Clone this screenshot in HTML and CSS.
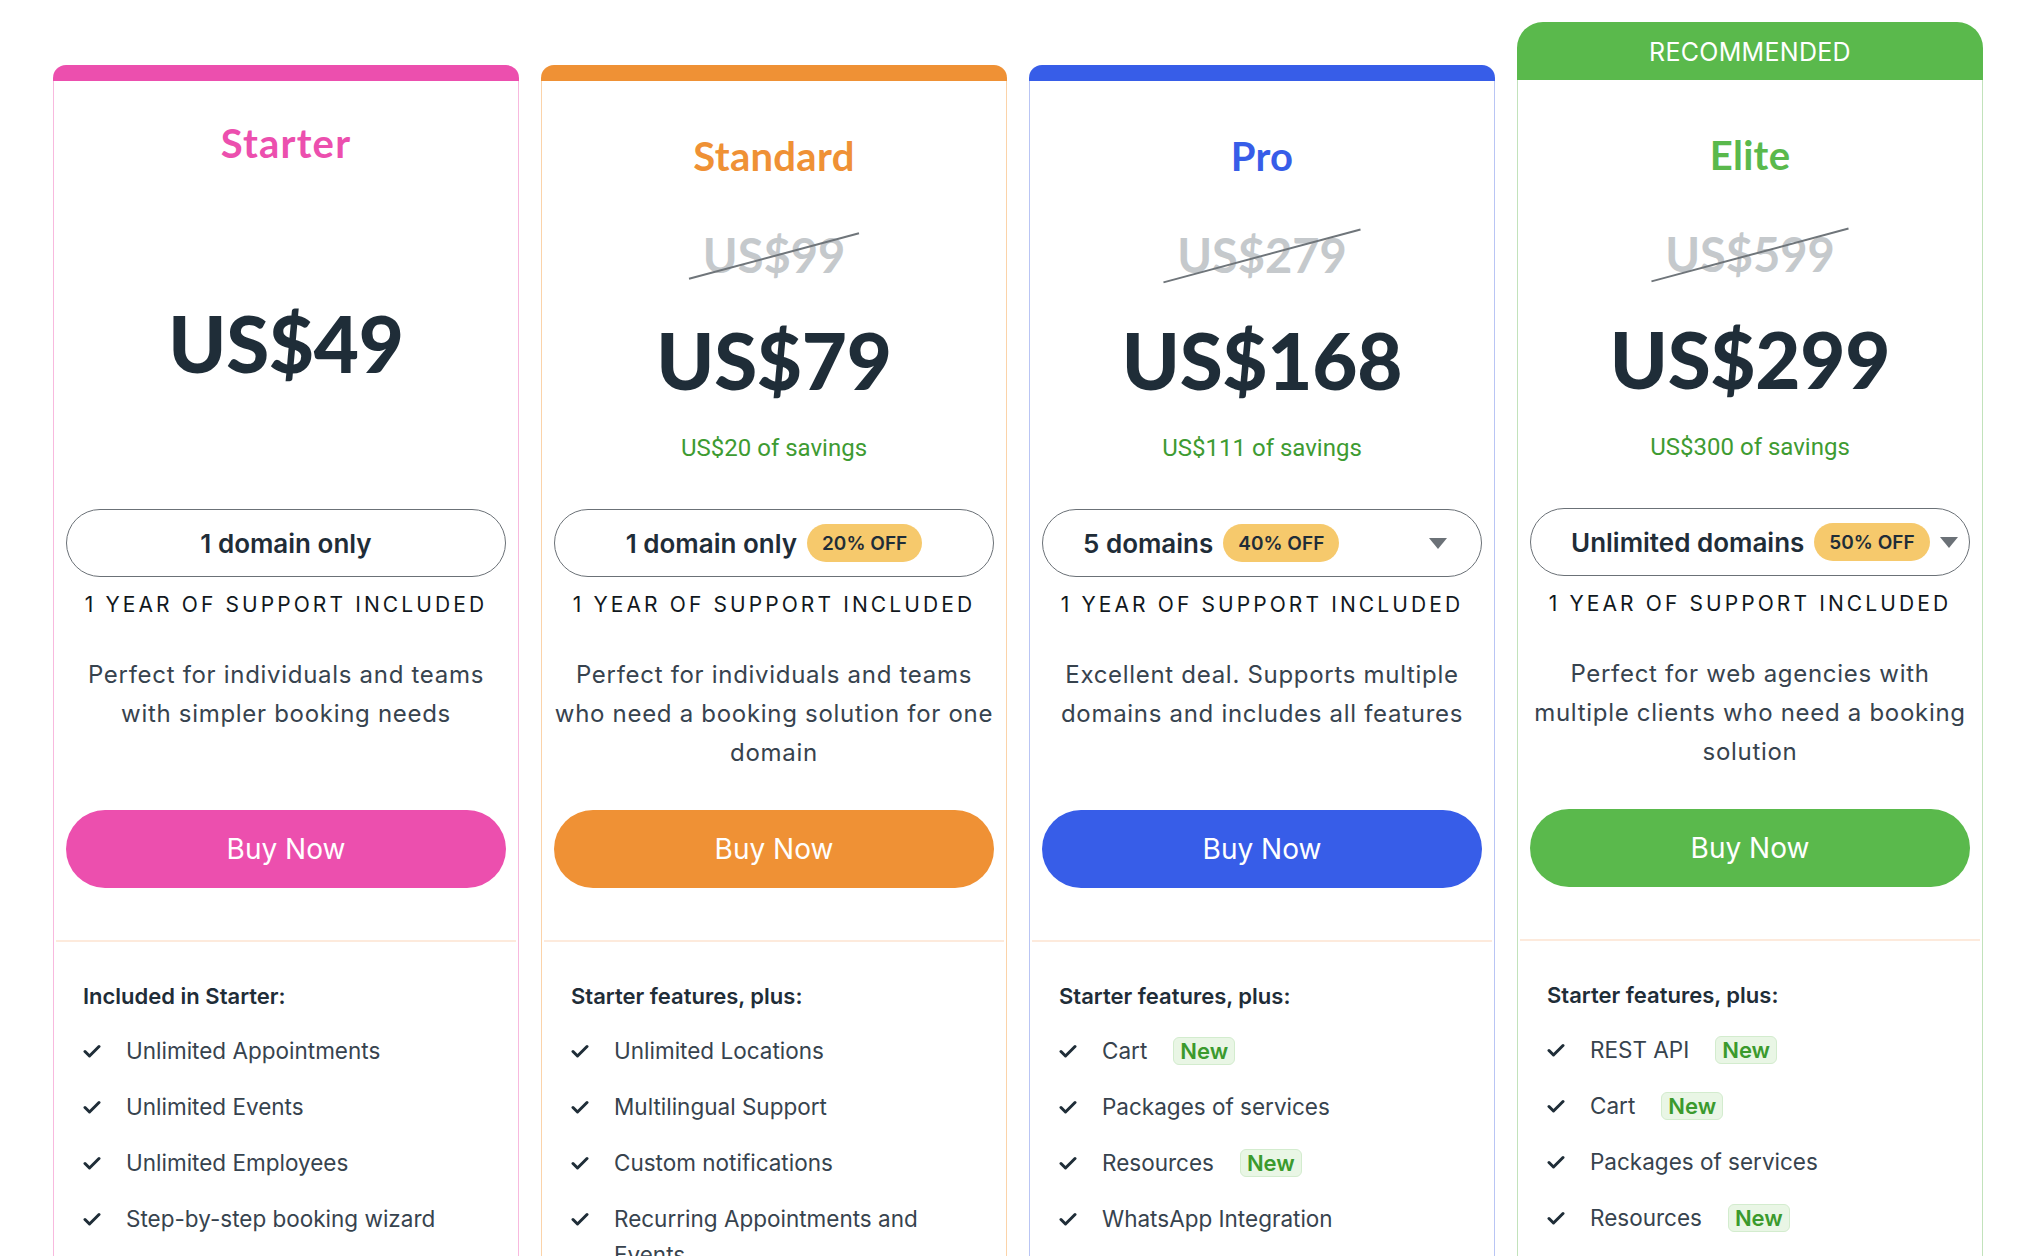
FILE: index.html
```html
<!DOCTYPE html>
<html lang="en">
<head>
<meta charset="utf-8">
<title>Pricing plans</title>
<link rel="stylesheet" href="styles.css">
</head>
<body>
<main class="plans">

  <section class="card card--starter">
    <div class="bar"></div>
    <div class="card-body">
      <div class="head">
        <h2 class="plan-name">Starter</h2>
        <div class="price">US$49</div>
      </div>
      <div class="select select--center"><span class="select-label">1 domain only</span></div>
      <p class="support">1 year of support included</p>
      <p class="desc">Perfect for individuals and teams with simpler booking needs</p>
      <a class="buy" href="#">Buy Now</a>
    </div>
    <div class="features">
      <h3 class="features-title">Included in Starter:</h3>
      <ul class="feature-list">
        <li><svg class="check" viewBox="0 0 18 14"><path d="M2 7.5 L6.5 12 L16 2.5"/></svg><span>Unlimited Appointments</span></li>
        <li><svg class="check" viewBox="0 0 18 14"><path d="M2 7.5 L6.5 12 L16 2.5"/></svg><span>Unlimited Events</span></li>
        <li><svg class="check" viewBox="0 0 18 14"><path d="M2 7.5 L6.5 12 L16 2.5"/></svg><span>Unlimited Employees</span></li>
        <li><svg class="check" viewBox="0 0 18 14"><path d="M2 7.5 L6.5 12 L16 2.5"/></svg><span>Step-by-step booking wizard</span></li>
      </ul>
    </div>
  </section>

  <section class="card card--standard">
    <div class="bar"></div>
    <div class="card-body">
      <div class="head">
        <h2 class="plan-name">Standard</h2>
        <div class="old-price"><span>US$99</span></div>
        <div class="price">US$79</div>
        <div class="savings">US$20 of savings</div>
      </div>
      <div class="select select--center"><span class="select-label">1 domain only</span><span class="off">20% OFF</span></div>
      <p class="support">1 year of support included</p>
      <p class="desc">Perfect for individuals and teams who need a booking solution for one domain</p>
      <a class="buy" href="#">Buy Now</a>
    </div>
    <div class="features">
      <h3 class="features-title">Starter features, plus:</h3>
      <ul class="feature-list">
        <li><svg class="check" viewBox="0 0 18 14"><path d="M2 7.5 L6.5 12 L16 2.5"/></svg><span>Unlimited Locations</span></li>
        <li><svg class="check" viewBox="0 0 18 14"><path d="M2 7.5 L6.5 12 L16 2.5"/></svg><span>Multilingual Support</span></li>
        <li><svg class="check" viewBox="0 0 18 14"><path d="M2 7.5 L6.5 12 L16 2.5"/></svg><span>Custom notifications</span></li>
        <li><svg class="check" viewBox="0 0 18 14"><path d="M2 7.5 L6.5 12 L16 2.5"/></svg><span>Recurring Appointments and Events</span></li>
      </ul>
    </div>
  </section>

  <section class="card card--pro">
    <div class="bar"></div>
    <div class="card-body">
      <div class="head">
        <h2 class="plan-name">Pro</h2>
        <div class="old-price"><span>US$279</span></div>
        <div class="price">US$168</div>
        <div class="savings">US$111 of savings</div>
      </div>
      <div class="select select--menu"><span class="select-label">5 domains</span><span class="off">40% OFF</span><span class="caret"></span></div>
      <p class="support">1 year of support included</p>
      <p class="desc">Excellent deal. Supports multiple domains and includes all features</p>
      <a class="buy" href="#">Buy Now</a>
    </div>
    <div class="features">
      <h3 class="features-title">Starter features, plus:</h3>
      <ul class="feature-list">
        <li><svg class="check" viewBox="0 0 18 14"><path d="M2 7.5 L6.5 12 L16 2.5"/></svg><span>Cart</span><span class="new">New</span></li>
        <li><svg class="check" viewBox="0 0 18 14"><path d="M2 7.5 L6.5 12 L16 2.5"/></svg><span>Packages of services</span></li>
        <li><svg class="check" viewBox="0 0 18 14"><path d="M2 7.5 L6.5 12 L16 2.5"/></svg><span>Resources</span><span class="new">New</span></li>
        <li><svg class="check" viewBox="0 0 18 14"><path d="M2 7.5 L6.5 12 L16 2.5"/></svg><span>WhatsApp Integration</span></li>
      </ul>
    </div>
  </section>

  <section class="card card--elite">
    <div class="ribbon">RECOMMENDED</div>
    <div class="card-body">
      <div class="head">
        <h2 class="plan-name">Elite</h2>
        <div class="old-price"><span>US$599</span></div>
        <div class="price">US$299</div>
        <div class="savings">US$300 of savings</div>
      </div>
      <div class="select select--menu"><span class="select-label">Unlimited domains</span><span class="off">50% OFF</span><span class="caret"></span></div>
      <p class="support">1 year of support included</p>
      <p class="desc">Perfect for web agencies with multiple clients who need a booking solution</p>
      <a class="buy" href="#">Buy Now</a>
    </div>
    <div class="features">
      <h3 class="features-title">Starter features, plus:</h3>
      <ul class="feature-list">
        <li><svg class="check" viewBox="0 0 18 14"><path d="M2 7.5 L6.5 12 L16 2.5"/></svg><span>REST API</span><span class="new">New</span></li>
        <li><svg class="check" viewBox="0 0 18 14"><path d="M2 7.5 L6.5 12 L16 2.5"/></svg><span>Cart</span><span class="new">New</span></li>
        <li><svg class="check" viewBox="0 0 18 14"><path d="M2 7.5 L6.5 12 L16 2.5"/></svg><span>Packages of services</span></li>
        <li><svg class="check" viewBox="0 0 18 14"><path d="M2 7.5 L6.5 12 L16 2.5"/></svg><span>Resources</span><span class="new">New</span></li>
      </ul>
    </div>
  </section>

</main>
</body>
</html>
```

FILE: styles.css
```css
* { box-sizing: border-box; }

html, body {
  margin: 0;
  padding: 0;
  background: #ffffff;
}

body {
  font-family: Inter, "Noto Sans", "Liberation Sans", sans-serif;
  color: #1f2d38;
  height: 1256px;
  overflow: hidden;
}

.plans {
  display: flex;
  align-items: flex-start;
  gap: 22px;
  padding: 22px 35px 0 53px;
}

.card {
  flex: 1 1 0;
  min-width: 0;
  margin-top: 43px;
  --accent: #ec4fae;
  --edge: #f8b9de;
}
.card--starter { --accent: #ec4fae; --edge: #f8b9de; }
.card--standard { --accent: #ef9135; --edge: #fbd3a9; }
.card--pro { --accent: #375de8; --edge: #b9c5f4; }
.card--elite { --accent: #5ab94c; --edge: #c2e3bb; margin-top: 0; }

.bar {
  height: 16px;
  background: var(--accent);
  border-radius: 13px 13px 0 0;
}

.ribbon {
  height: 58px;
  background: var(--accent);
  border-radius: 26px 26px 0 0;
  color: #ffffff;
  font-size: 25px;
  font-weight: 400;
  letter-spacing: 0.3px;
  display: flex;
  align-items: center;
  justify-content: center;
  padding-top: 2px;
}

.card-body {
  border-left: 1px solid var(--edge);
  border-right: 1px solid var(--edge);
  padding: 0 12px 52px;
  display: flex;
  flex-direction: column;
  align-items: stretch;
  text-align: center;
}

.head {
  height: 428px;
  display: flex;
  flex-direction: column;
  align-items: center;
}

.plan-name {
  margin: 50px 0 0;
  font-family: Lato, "Noto Sans", sans-serif;
  font-weight: 700;
  font-size: 40px;
  line-height: 50px;
  color: var(--accent);
  letter-spacing: 0.3px;
}
.card--starter .plan-name { letter-spacing: 1.2px; }

.old-price {
  margin-top: 46px;
  font-family: Lato, "Noto Sans", sans-serif;
  font-weight: 700;
  font-size: 47px;
  line-height: 56px;
  color: #c5c9cc;
}
.old-price span {
  position: relative;
  display: inline-block;
}
.old-price span::after {
  content: "";
  position: absolute;
  left: -17px;
  right: -17px;
  top: 50%;
  height: 2px;
  background: #6f757a;
  transform: rotate(-15deg);
}

.price {
  margin-top: 32px;
  font-family: Lato, "Noto Sans", sans-serif;
  font-weight: 900;
  font-size: 78px;
  line-height: 90px;
  color: #1f2d38;
  letter-spacing: -0.3px;
}

.savings {
  margin-top: 28px;
  font-family: Roboto, "Noto Sans", sans-serif;
  font-size: 24px;
  line-height: 30px;
  color: #3e9b32;
}

.card--starter .plan-name { margin-top: 37px; }
.card--starter .price { margin-top: 130px; }

.select {
  height: 68px;
  border: 1px solid #6b7177;
  border-radius: 34px;
  display: flex;
  align-items: center;
  gap: 10px;
}
.select--center { justify-content: center; }
.select--menu { justify-content: flex-start; padding: 0 34px 0 40px; }

.select-label {
  font-size: 26px;
  font-weight: 600;
  color: #1f2d38;
  white-space: nowrap;
}

.off {
  display: inline-flex;
  align-items: center;
  height: 38px;
  padding: 0 15px;
  border-radius: 19px;
  background: #f6c96c;
  font-size: 19px;
  font-weight: 600;
  color: #1f2d38;
  white-space: nowrap;
}

.caret {
  margin-left: auto;
  width: 0;
  height: 0;
  border-left: 9.5px solid transparent;
  border-right: 9.5px solid transparent;
  border-top: 11px solid #6b7177;
}

.support {
  margin: 13px 0 0;
  font-size: 21px;
  line-height: 30px;
  text-transform: uppercase;
  letter-spacing: 3.1px;
  color: #111820;
}

.desc {
  margin: 35px -5px 0;
  height: 155px;
  font-size: 24px;
  line-height: 39px;
  color: #37434e;
  letter-spacing: 0.7px;
}

.buy {
  display: flex;
  align-items: center;
  justify-content: center;
  height: 78px;
  border-radius: 39px;
  background: var(--accent);
  color: #ffffff;
  font-size: 28px;
  font-weight: 400;
  text-decoration: none;
}

.features {
  border-left: 1px solid var(--edge);
  border-right: 1px solid var(--edge);
  padding: 0 0 40px;
}

.features-title {
  margin: 0 2px;
  border-top: 2px solid #fdeadc;
  padding: 39px 0 0 27px;
  font-size: 22px;
  font-weight: 600;
  line-height: 30px;
  color: #1f2d38;
}

.feature-list {
  list-style: none;
  margin: 22px 0 0;
  padding: 0 28px 0 29px;
  display: flex;
  flex-direction: column;
  gap: 20px;
}

.feature-list li {
  display: flex;
  align-items: flex-start;
  font-size: 22.5px;
  line-height: 36px;
  color: #37434e;
  letter-spacing: 0;
}

.check {
  flex: none;
  width: 18px;
  height: 14px;
  margin: 11px 25px 0 0;
}
.check path {
  fill: none;
  stroke: #1f2d38;
  stroke-width: 3;
  stroke-linecap: round;
  stroke-linejoin: round;
}

.new {
  margin: 4px 0 0 26px;
  height: 28px;
  padding: 0 6px;
  border-radius: 6px;
  background: #e9f6e5;
  border: 1px solid #d3ecce;
  color: #3b9a2d;
  font-weight: 600;
  font-size: 22px;
  line-height: 26px;
  letter-spacing: 0;
}
```
